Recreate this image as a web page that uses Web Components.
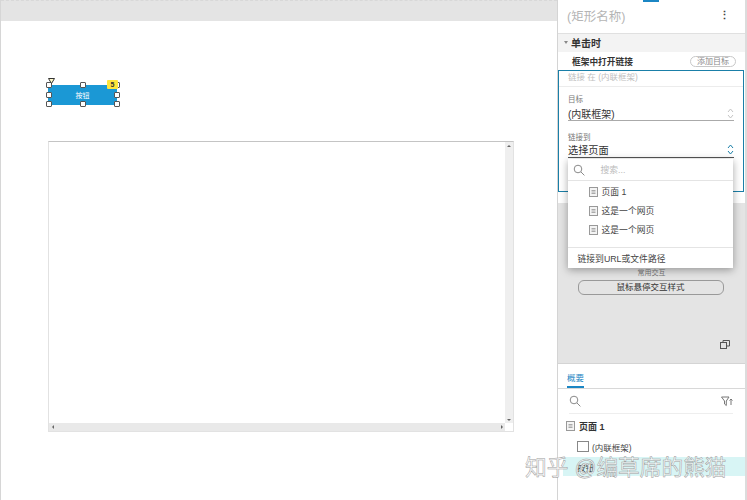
<!DOCTYPE html>
<html lang="zh">
<head>
<meta charset="utf-8">
<title>Axure</title>
<style>
  html, body { margin: 0; height: 100%; overflow: hidden; background: #fff; }
  body {
    font-family: "Liberation Sans", "Noto Sans CJK SC", sans-serif;
    display: flex;
    width: 747px;
    height: 500px;
  }
</style>
</head>
<body>
<design-canvas></design-canvas>
<side-panel></side-panel>
<water-mark>知乎 @编草席的熊猫</water-mark>

<script>
const PAGE_ICON = `<svg width="9" height="10" viewBox="0 0 9 10"><rect x=".5" y=".5" width="8" height="9" fill="#f4f4f4" stroke="#999"/><path d="M2.5 3.5h4M2.5 5h4M2.5 6.5h4" stroke="#aaa"/></svg>`;
const SEARCH_ICON = `<svg width="12" height="12" viewBox="0 0 12 12" fill="none" stroke="#8a8a8a"><circle cx="5" cy="5" r="3.8"/><path d="M8 8l3.4 3.4"/></svg>`;

class DesignCanvas extends HTMLElement {
    constructor() {
        super();
        this.attachShadow({ mode: 'open' });
        this.shadowRoot.innerHTML = `
            <style>
                :host { display: block; position: relative; width: 557px; height: 500px; flex: none; box-sizing: border-box; border-left: 1px solid #d6d6d6; }
                .band { height: 21px; background: #e4e4e4; border-top: 1px dashed #d8d8d8; box-sizing: border-box; }
                .btn { position: absolute; left: 47px; top: 85px; width: 69px; height: 20px; background: #1b98d5; color: #fff; font-size: 7px; display: flex; align-items: center; justify-content: center; }
                .h { position: absolute; width: 6px; height: 6px; box-sizing: border-box; background: #fff; border: 1px solid #555; border-radius: 1px; }
                .flag { position: absolute; left: 106px; top: 80px; width: 11px; height: 9px; background: #ffe63c; font-size: 7px; font-weight: bold; line-height: 9px; text-align: center; color: #333; border-radius: 1px; }
                .tri { position: absolute; left: 47px; top: 78px; }
                .frame { position: absolute; left: 47px; top: 141px; width: 466px; height: 291px; box-sizing: border-box; border: 1px solid #e2e2e2; border-top: 1px solid #c4c4c4; background: #fff; }
                .vbar { position: absolute; right: 0; top: 0; bottom: 8px; width: 8px; background: #efefef; }
                .hbar { position: absolute; left: 0; right: 8px; bottom: 0; height: 8px; background: #e9e9e9; }
                .ar { position: absolute; width: 0; height: 0; border: 2px solid transparent; }
            </style>
            <div class="band"></div>
            <div class="btn">按钮</div>
            <span class="h" style="left:45px;top:82px"></span>
            <span class="h" style="left:79px;top:82px"></span>
            <span class="h" style="left:113px;top:82px"></span>
            <span class="h" style="left:45px;top:92px"></span>
            <span class="h" style="left:113px;top:92px"></span>
            <span class="h" style="left:45px;top:101px"></span>
            <span class="h" style="left:79px;top:101px"></span>
            <span class="h" style="left:113px;top:101px"></span>
            <span class="flag">5</span>
            <svg class="tri" width="7" height="6" viewBox="0 0 7 6"><path d="M.5.5h6L3.5 5.5z" fill="#fff8c8" stroke="#333"/></svg>
            <div class="frame">
                <div class="vbar">
                    <span class="ar" style="left:2px;top:1px;border-bottom-color:#666"></span>
                    <span class="ar" style="left:2px;bottom:0;border-top-color:#666"></span>
                </div>
                <div class="hbar">
                    <span class="ar" style="left:1px;top:2px;border-right-color:#666"></span>
                    <span class="ar" style="right:0;top:2px;border-left-color:#666"></span>
                </div>
            </div>
        `;
    }
}

class LinkDropdown extends HTMLElement {
    constructor() {
        super();
        this.attachShadow({ mode: 'open' });
        this.shadowRoot.innerHTML = `
            <style>
                :host { position: absolute; left: 8.5px; top: 88px; width: 165px; height: 109px; background: #fff; box-shadow: 0 2px 8px rgba(0,0,0,.35); display: flex; flex-direction: column; font-size: 8.8px; color: #444; z-index: 2; }
                .search { height: 21px; border-bottom: 1px solid #e4e4e4; display: flex; align-items: center; gap: 16px; padding-left: 5px; color: #bbb; }
                .list { flex: 1; padding-top: 1px; }
                .item { height: 19px; display: flex; align-items: center; gap: 4px; padding-left: 21px; }
                .foot { height: 20px; border-top: 1px solid #e4e4e4; display: flex; align-items: center; padding-left: 10px; }
            </style>
            <div class="search">${SEARCH_ICON}<span>搜索...</span></div>
            <div class="list">
                <div class="item">${PAGE_ICON}<span>页面 1</span></div>
                <div class="item">${PAGE_ICON}<span>这是一个网页</span></div>
                <div class="item">${PAGE_ICON}<span>这是一个网页</span></div>
            </div>
            <div class="foot">链接到URL或文件路径</div>
        `;
    }
}

class SidePanel extends HTMLElement {
    constructor() {
        super();
        this.attachShadow({ mode: 'open' });
        this.shadowRoot.innerHTML = `
            <style>
                :host { display: flex; flex-direction: column; width: 190px; height: 500px; flex: none; box-sizing: border-box; border-left: 1px solid #d4d4d4; border-right: 2px solid #dcdcdc; position: relative; font-size: 10px; color: #333; }
                .tabmark { position: absolute; left: 85px; top: 0; width: 16px; height: 2px; background: #1b86c4; }
                .title { height: 31px; padding: 0 15px 2px 9px; flex: none; display: flex; align-items: center; justify-content: space-between; font-size: 12.5px; color: #b5b5b5; border-bottom: 1px solid #e0e0e0; }
                .kebab { color: #444; font-size: 11px; font-weight: bold; }
                .sec { height: 16px; padding: 0 0 2px 6px; flex: none; background: #f3f3f3; display: flex; align-items: center; gap: 3px; font-weight: bold; font-size: 10px; color: #333; }
                .sec i { width: 0; height: 0; border: 2.5px solid transparent; border-top: 3px solid #888; border-bottom: 0; }
                .act { height: 18px; flex: none; display: flex; align-items: center; justify-content: space-between; padding: 0 9px 0 14px; font-weight: bold; font-size: 8.7px; box-sizing: border-box; }
                .pill { width: 46px; height: 11px; box-sizing: border-box; border: 1px solid #c8c8c8; border-radius: 6px; font-size: 8px; line-height: 9px; text-align: center; color: #888; font-weight: normal; }
                .box { height: 122px; flex: none; width: 186px; box-sizing: border-box; border: 1.5px solid #1a7fa8; position: relative; }
                .hint { height: 15px; border-bottom: 1px solid #ececec; font-size: 8.5px; color: #c0c0c0; padding-left: 9px; line-height: 13px; }
                .lab { font-size: 7.5px; color: #777; padding: 8px 0 0 9px; height: 9px; line-height: 9px; }
                .lab.second { padding-top: 12px; }
                .sel { margin: 0 9px; height: 17px; padding-top: 2px; box-sizing: border-box; border-bottom: 1px solid #aaa; font-size: 10px; display: flex; align-items: center; justify-content: space-between; color: #333; }
                .sel.on { height: 15.5px; padding-top: 0; border-bottom-color: #555; font-size: 10.2px; }
                .gap { height: 11px; flex: none; }
                .gray { height: 160px; flex: none; background: #e4e4e4; border-bottom: 1px solid #d4d4d4; position: relative; display: flex; flex-direction: column; align-items: center; }
                .common { font-size: 7px; color: #777; margin-top: 65px; height: 9px; line-height: 9px; }
                .hover { margin: 3px 0 0 -2px; width: 146px; height: 15px; box-sizing: border-box; border: 1px solid #999; border-radius: 6px; font-size: 8.5px; line-height: 13px; text-align: center; color: #333; }
                .restore { position: absolute; left: 162px; top: 137px; }
                .tabs { height: 25px; flex: none; border-bottom: 1px solid #d8d8d8; padding-left: 9px; box-sizing: border-box; }
                .tabs span { display: inline-block; height: 24px; box-sizing: border-box; border-bottom: 2px solid #1b86c4; color: #1b86c4; font-size: 8.5px; padding-top: 8px; line-height: 12px; }
                .tools { height: 24px; flex: none; margin: 0 12px 0 11px; display: flex; align-items: center; justify-content: space-between; border-bottom: 1px solid #eee; }
                .row { display: flex; align-items: center; flex: none; }
                .r1 { height: 24px; gap: 4px; padding-left: 8px; font-weight: bold; font-size: 9px; }
                .r2 { height: 17px; gap: 3px; padding-left: 19px; font-size: 8.5px; color: #444; }
                .r2 b { width: 10px; height: 9px; border: 1px solid #888; background: #fff; }
                .r3 { height: 19px; margin: 2px 0 0 5px; background: #d8f5f5; padding-left: 14px; font-size: 8.5px; color: #333; }
            </style>
            <div class="tabmark"></div>
            <div class="title"><span>(矩形名称)</span><span class="kebab">⋮</span></div>
            <div class="sec"><i></i><span>单击时</span></div>
            <div class="act"><span>框架中打开链接</span><span class="pill">添加目标</span></div>
            <div class="box">
                <div class="hint">链接 在 (内联框架)</div>
                <div class="lab">目标</div>
                <div class="sel"><span>(内联框架)</span>
                    <svg width="7" height="11" viewBox="0 0 7 11" fill="none" stroke="#c4c4c4"><path d="M1 4l2.5-3L6 4M1 7l2.5 3L6 7"/></svg></div>
                <div class="lab second">链接到</div>
                <div class="sel on"><span>选择页面</span>
                    <svg width="7" height="11" viewBox="0 0 7 11" fill="none" stroke="#1a7fa8"><path d="M1 4l2.5-3L6 4M1 7l2.5 3L6 7"/></svg></div>
                <link-dropdown></link-dropdown>
            </div>
            <div class="gap"></div>
            <div class="gray">
                <div class="common">常用交互</div>
                <div class="hover">鼠标悬停交互样式</div>
                <svg class="restore" width="10" height="9" viewBox="0 0 10 9" fill="none" stroke="#555"><rect x=".5" y="2.5" width="6" height="6"/><path d="M3 2.5V.5h6.500v5.500H6.500"/></svg>
            </div>
            <div class="tabs"><span>概要</span></div>
            <div class="tools">${SEARCH_ICON}
                <svg width="12" height="11" viewBox="0 0 12 11" fill="none" stroke="#777"><path d="M.5 1h7.500L5.300 5v4.500L3.500 8V5zM10 3v6M8.500 4.500L10 3l1.500 1.500"/></svg></div>
            <div class="row r1">${PAGE_ICON}<span>页面 1</span></div>
            <div class="row r2"><b></b><span>(内联框架)</span></div>
            <div class="row r3"><span>按钮</span></div>
        `;
    }
}

class WaterMark extends HTMLElement {
    constructor() {
        super();
        this.attachShadow({ mode: 'open' });
        this.shadowRoot.innerHTML = `
            <style>
                :host { position: absolute; left: 525px; top: 455px; font-size: 21.7px; line-height: 25px; color: rgba(255,255,255,.8); -webkit-text-stroke: .5px #9a9a9a; white-space: nowrap; z-index: 5; }
            </style>
            <slot></slot>
        `;
    }
}

customElements.define('link-dropdown', LinkDropdown);
customElements.define('design-canvas', DesignCanvas);
customElements.define('side-panel', SidePanel);
customElements.define('water-mark', WaterMark);
</script>
</body>
</html>
